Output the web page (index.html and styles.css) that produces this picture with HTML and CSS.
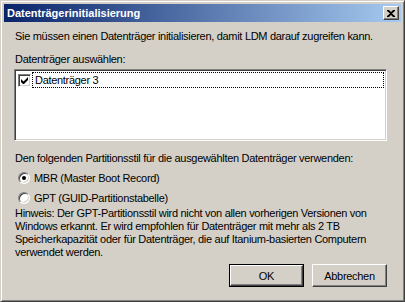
FILE: index.html
```html
<!DOCTYPE html>
<html lang="de">
<head>
    <meta charset="UTF-8">
    <title>Datenträgerinitialisierung</title>
    <link rel="stylesheet" href="styles.css">
</head>
<body>
    <div class="window">
        <div class="titlebar">
            <span class="title">Datenträgerinitialisierung</span>
            <span class="close-btn">
                <svg width="8" height="7" viewBox="0 0 8 7">
                    <path d="M0 0h2l2 2 2-2h2v1L5 3.5 8 6v1H6L4 5 2 7H0V6l3-2.5L0 1z" fill="#000"/>
                </svg>
            </span>
        </div>
        <div class="content">
            <p class="intro">Sie müssen einen Datenträger initialisieren, damit LDM darauf zugreifen kann.</p>
            <p class="label">Datenträger auswählen:</p>
            <div class="listbox">
                <div class="list-item">
                    <span class="checkbox">
                        <svg width="7" height="7" viewBox="0 0 7 7">
                            <path d="M0 2v3l2 2h1l4-4V0L2.5 4.5z" fill="#000"/>
                        </svg>
                    </span>
                    <span class="item-text">Datenträger 3</span>
                </div>
            </div>
            <p class="label style-label">Den folgenden Partitionsstil für die ausgewählten Datenträger verwenden:</p>
            <div class="radio-row">
                <span class="radio checked"></span>
                <span>MBR (Master Boot Record)</span>
            </div>
            <div class="radio-row">
                <span class="radio"></span>
                <span>GPT (GUID-Partitionstabelle)</span>
            </div>
            <p class="hint">Hinweis: Der GPT-Partitionsstil wird nicht von allen vorherigen Versionen von<br>
                Windows erkannt. Er wird empfohlen für Datenträger mit mehr als 2 TB<br>
                Speicherkapazität oder für Datenträger, die auf Itanium-basierten Computern<br>
                verwendet werden.</p>
            <div class="buttons">
                <span class="btn default"><span class="btn-inner">OK</span></span>
                <span class="btn"><span class="btn-inner">Abbrechen</span></span>
            </div>
        </div>
    </div>
</body>
</html>
```

FILE: styles.css
```css
body {
    margin: 0;
    font-family: 'Liberation Sans', Arial, sans-serif;
    font-size: 11px;
    letter-spacing: -0.3px;
    color: #000;
}
.window {
    width: 405px;
    height: 302px;
    box-sizing: border-box;
    background: #d4d0c8;
    border: 1px solid;
    border-color: #d4d0c8 #404040 #404040 #d4d0c8;
    box-shadow: inset 1px 1px #fff, inset -1px -1px #808080;
    padding: 3px;
}
.titlebar {
    height: 18px;
    display: flex;
    align-items: center;
    justify-content: space-between;
    background: linear-gradient(to right, #0a246a, #a6caf0);
    padding: 0 2px 0 3px;
}
.title {
    color: #fff;
    font-weight: bold;
    font-size: 11px;
    letter-spacing: 0;
}
.close-btn {
    width: 16px;
    height: 14px;
    box-sizing: border-box;
    background: #d4d0c8;
    border: 1px solid;
    border-color: #fff #404040 #404040 #fff;
    box-shadow: inset -1px -1px #808080;
    display: flex;
    align-items: center;
    justify-content: center;
}
.content {
    padding: 0 14px 0 10px;
    white-space: nowrap;
}
p {
    margin: 0;
    line-height: 13px;
}
.intro {
    margin-top: 8px;
    padding-left: 1px;
}
.label {
    margin-top: 10px;
    padding-left: 1px;
}
.style-label {
    margin-top: 11px;
}
.listbox {
    margin-top: 3px;
    height: 72px;
    box-sizing: border-box;
    background: #fff;
    border: 1px solid;
    border-color: #808080 #fff #fff #808080;
    box-shadow: inset 1px 1px #404040, inset -1px -1px #d4d0c8;
    padding: 2px;
}
.list-item {
    display: flex;
    align-items: center;
    height: 16px;
}
.checkbox {
    width: 13px;
    height: 13px;
    box-sizing: border-box;
    margin-left: 1px;
    background: #fff;
    border: 1px solid;
    border-color: #808080 #fff #fff #808080;
    box-shadow: inset 1px 1px #404040, inset -1px -1px #d4d0c8;
    display: flex;
    align-items: center;
    justify-content: center;
}
.item-text {
    flex: 1;
    height: 16px;
    line-height: 14px;
    box-sizing: border-box;
    margin-left: 1px;
    padding-left: 2px;
    border: 1px dotted #000;
}
.radio-row {
    display: flex;
    align-items: center;
    height: 13px;
    margin-top: 6px;
    padding-left: 4px;
    gap: 4px;
}
.radio-row + .radio-row {
    margin-top: 7px;
}
.radio {
    width: 12px;
    height: 12px;
    box-sizing: border-box;
    border-radius: 50%;
    background: #fff;
    border: 1px solid;
    border-color: #808080 #fff #fff #808080;
    box-shadow: inset 1px 1px #404040, inset -1px -1px #d4d0c8;
    display: flex;
    align-items: center;
    justify-content: center;
}
.radio.checked::after {
    content: "";
    width: 4px;
    height: 4px;
    border-radius: 50%;
    background: #000;
}
.hint {
    margin-top: 3px;
    padding-left: 1px;
}
.buttons {
    display: flex;
    justify-content: flex-end;
    gap: 8px;
    margin-top: 5px;
}
.btn {
    width: 75px;
    height: 23px;
    box-sizing: border-box;
    display: flex;
}
.btn-inner {
    flex: 1;
    display: flex;
    align-items: center;
    justify-content: center;
    border: 1px solid;
    border-color: #fff #404040 #404040 #fff;
    box-shadow: inset -1px -1px #808080;
}
.btn.default {
    border: 1px solid #000;
}
```
